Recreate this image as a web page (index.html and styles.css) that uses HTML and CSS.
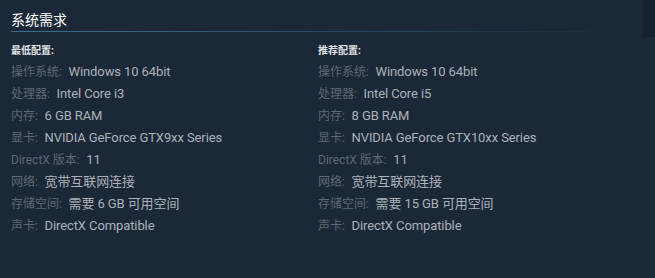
FILE: index.html
```html
<!DOCTYPE html>
<html lang="zh-CN">
<head>
<meta charset="utf-8">
<title>系统需求</title>
<link rel="stylesheet" href="styles.css">
</head>
<body>
<div class="scroll-thumb"></div>
<section class="sysreq">
  <h2 class="sysreq-title">系统需求</h2>
  <div class="cols">
    <div class="col">
      <div class="col-head">最低配置:</div>
      <ul class="reqs">
        <li><span class="lbl">操作系统:</span> Windows 10 64bit</li>
        <li><span class="lbl">处理器:</span> Intel Core i3</li>
        <li><span class="lbl">内存:</span> 6 GB RAM</li>
        <li><span class="lbl">显卡:</span> NVIDIA GeForce GTX9xx Series</li>
        <li><span class="lbl">DirectX 版本:</span> 11</li>
        <li><span class="lbl">网络:</span> 宽带互联网连接</li>
        <li><span class="lbl">存储空间:</span> 需要 6 GB 可用空间</li>
        <li><span class="lbl">声卡:</span> DirectX Compatible</li>
      </ul>
    </div>
    <div class="col">
      <div class="col-head">推荐配置:</div>
      <ul class="reqs">
        <li><span class="lbl">操作系统:</span> Windows 10 64bit</li>
        <li><span class="lbl">处理器:</span> Intel Core i5</li>
        <li><span class="lbl">内存:</span> 8 GB RAM</li>
        <li><span class="lbl">显卡:</span> NVIDIA GeForce GTX10xx Series</li>
        <li><span class="lbl">DirectX 版本:</span> 11</li>
        <li><span class="lbl">网络:</span> 宽带互联网连接</li>
        <li><span class="lbl">存储空间:</span> 需要 15 GB 可用空间</li>
        <li><span class="lbl">声卡:</span> DirectX Compatible</li>
      </ul>
    </div>
  </div>
</section>
</body>
</html>
```

FILE: styles.css
```css
html, body {
  margin: 0;
  padding: 0;
  background: #1b2838;
}
body {
  width: 655px;
  height: 278px;
  overflow: hidden;
  position: relative;
  font-family: Roboto, "Noto Sans CJK SC", sans-serif;
}
.scroll-thumb {
  position: absolute;
  top: 0;
  right: 0;
  width: 12px;
  height: 37px;
  background: #172230;
}
.sysreq {
  padding: 10px 0 0 11px;
  width: 614px;
}
.sysreq-title {
  margin: 0;
  font-size: 14px;
  line-height: 20px;
  font-weight: normal;
  color: #ffffff;
  padding-bottom: 2px;
  background: linear-gradient(to right, #3e6e8e 0%, rgba(62, 110, 142, 0.5) 50%, rgba(62, 110, 142, 0) 100%) left bottom / 100% 1px no-repeat;
}
.cols {
  display: grid;
  grid-template-columns: 307px 307px;
  margin-top: 12px;
}
.col-head {
  font-size: 10px;
  line-height: 14px;
  font-weight: bold;
  color: #e2e4e6;
}
.reqs {
  list-style: none;
  margin: 3px 0 0 0;
  padding: 0;
}
.reqs li {
  font-size: 13px;
  line-height: 22px;
  height: 22px;
  color: #acb2b8;
  letter-spacing: -0.1px;
  white-space: nowrap;
}
.lbl {
  font-size: 12px;
  color: #5f6873;
  letter-spacing: 0;
  margin-right: 3.5px;
}
```
